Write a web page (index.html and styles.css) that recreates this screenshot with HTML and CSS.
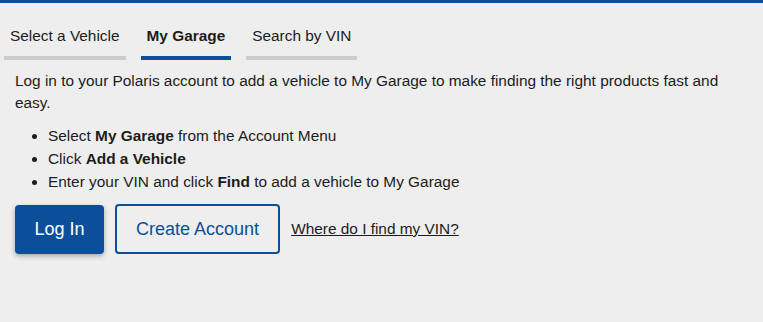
FILE: index.html
```html
<!DOCTYPE html>
<html lang="en">
<head>
    <meta charset="UTF-8">
    <meta name="viewport" content="width=device-width, initial-scale=1.0">
    <title>My Garage</title>
    <link rel="stylesheet" href="styles.css">
</head>
<body>
    <div class="page">
        <div class="tabs">
            <div class="tab">Select a Vehicle</div>
            <div class="tab active">My Garage</div>
            <div class="tab">Search by VIN</div>
        </div>

        <div class="panel">
            <p class="intro">Log in to your Polaris account to add a vehicle to My Garage to make finding the right products fast and easy.</p>
            <ul class="steps">
                <li>Select <b>My Garage</b> from the Account Menu</li>
                <li>Click <b>Add a Vehicle</b></li>
                <li>Enter your VIN and click <b>Find</b> to add a vehicle to My Garage</li>
            </ul>
            <div class="actions">
                <button class="btn btn-primary">Log In</button>
                <button class="btn btn-outline">Create Account</button>
                <a class="vin-link" href="#">Where do I find my VIN?</a>
            </div>
        </div>
    </div>
</body>
</html>
```

FILE: styles.css
```css
* {
    margin: 0;
    padding: 0;
    box-sizing: border-box;
}

body {
    font-family: 'Liberation Sans', Arial, sans-serif;
    background: #eeeeee;
    color: #1c1c1c;
    font-size: 15.4px;
}

.page {
    border-top: 3px solid #0b4f9b;
    min-height: 100vh;
}

.tabs {
    display: flex;
    gap: 15px;
    padding: 24px 0 0 4px;
}

.tab {
    padding: 0 6px 11px;
    line-height: 18px;
    border-bottom: 4px solid #cccccc;
}

.tab.active {
    font-weight: bold;
    border-bottom-color: #0b4f9b;
}

.panel {
    padding: 10px 15px 0;
}

.intro {
    line-height: 22px;
    padding-right: 20px;
}

.steps {
    margin-top: 10px;
    padding-left: 33px;
    line-height: 23px;
}

.actions {
    display: flex;
    align-items: center;
    gap: 11px;
    margin-top: 11px;
}

.btn {
    font-family: inherit;
    font-size: 18px;
    height: 49px;
    padding: 0 19.5px;
    border-radius: 4px;
    cursor: pointer;
}

.btn-primary {
    background: #0b4f9b;
    color: white;
    border: none;
    box-shadow: 0 2px 5px rgba(0, 0, 0, 0.3);
}

.btn-outline {
    background: transparent;
    color: #0b4f9b;
    border: 2px solid #0b4f9b;
    height: 50px;
    padding: 0 19px;
}

.vin-link {
    color: #1c1c1c;
    text-decoration: underline;
    font-size: 15.4px;
}
```
